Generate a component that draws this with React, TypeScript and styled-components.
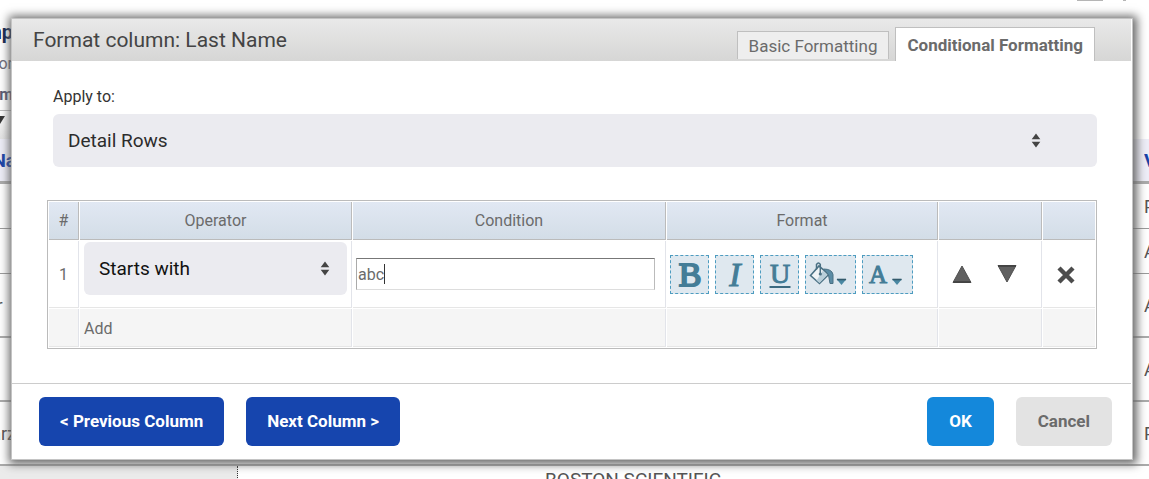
import React, { useState } from 'react';
import styled, { createGlobalStyle, css } from 'styled-components';

const GlobalStyle = createGlobalStyle`
  *, *::before, *::after { box-sizing: border-box; }
  body {
    margin: 0;
    overflow: hidden;
    background: #fff;
    font-family: Roboto, "Liberation Sans", sans-serif;
    font-size: 16px;
    color: #6b6b6b;
  }
  button, input, select { font: inherit; color: inherit; margin: 0; }
`;

/* ---------- report behind the dialog ---------- */

const Screen = styled.div`
  position: relative;
  min-height: 100vh;
  overflow: hidden;
`;

const Report = styled.div`
  display: flex;
  flex-direction: column;
`;

const ReportTop = styled.div`
  display: flex;
  justify-content: flex-end;
  gap: 20px;
  height: 16px;
  padding-right: 23px;
`;

const Mark = styled.span<{ $width: number }>`
  width: ${p => p.$width}px;
  height: 1px;
  background: #b5b5b5;
`;

const ReportLine = styled.div<{ $height: number; $size?: number; $bold?: boolean; $color: string }>`
  display: flex;
  align-items: center;
  justify-content: flex-end;
  width: 13px;
  height: ${p => p.$height}px;
  font-size: ${p => p.$size ?? 16}px;
  font-weight: ${p => (p.$bold ? 700 : 400)};
  color: ${p => p.$color};
`;

const ReportTools = styled.div`
  display: flex;
  width: 237px;
  height: 29px;
  padding-top: 5px;
  border-top: 1px solid #bbb;
  background: linear-gradient(#fff, #e4e4e4);
`;

const rowKinds = {
  head: css`
    height: 45px;
    background: #eeeef8;
    border-bottom: 3px solid #aaa;
    color: #1742a8;
    font-weight: 700;
    font-size: 19px;
  `,
  small: css`
    height: 45px;
    border-bottom: 1px solid #999;
  `,
  large: css`
    height: 64px;
    border-bottom: 2px solid #aaa;
  `,
};

const ReportRow = styled.div<{ $kind: keyof typeof rowKinds }>`
  display: flex;
  justify-content: space-between;
  align-items: center;
  font-size: 18px;
  color: #555;
  ${p => rowKinds[p.$kind]}
`;

const RowStart = styled.span`
  display: flex;
  justify-content: flex-end;
  width: 16px;
`;

const RowEnd = styled.span`
  width: 5px;
  overflow: hidden;
`;

const GroupRow = styled.div`
  display: grid;
  grid-template-columns: 238px 1fr;
  height: 32px;
`;

const GroupLead = styled.div`
  background: #ebebeb;
  border-right: 1px dotted #333;
`;

const GroupName = styled.div`
  padding: 2px 0 0 307px;
  font-size: 19px;
  line-height: 24px;
  color: #555;
`;

/* ---------- dialog ---------- */

const Dialog = styled.section`
  position: absolute;
  top: 18px;
  left: 11px;
  right: 16px;
  padding-right: 1px;
  border: 1px solid #c4c4c4;
  background: #fff;
  box-shadow: 1px 1px 9px 3px #666;
`;

const TitleBar = styled.header`
  display: flex;
  justify-content: space-between;
  align-items: flex-end;
  height: 42px;
  padding: 0 36px 0 21px;
  background: linear-gradient(#e9e9e9, #d6d6d5);
`;

const Title = styled.h1`
  margin: 0;
  font-size: 21px;
  line-height: 42px;
  font-weight: 400;
  color: #444;
`;

const Tabs = styled.nav`
  display: flex;
  align-items: flex-end;
  gap: 6px;
`;

const Tab = styled.button<{ $active?: boolean }>`
  height: ${p => (p.$active ? 34 : 28)}px;
  margin-bottom: ${p => (p.$active ? 0 : 2)}px;
  padding: 0 11px;
  border: 1px solid #bfbfbf;
  border-bottom: 0;
  background: ${p => (p.$active ? '#fff' : '#eee')};
  font-size: 17px;
  font-weight: ${p => (p.$active ? 700 : 400)};
  color: #6b6b6b;
`;

const Body = styled.div`
  padding: 26px 34px 34px 35px;
`;

const Field = styled.div`
  display: flex;
  flex-direction: column;
  gap: 8px;
  margin: 0 0 33px 6px;
`;

const Label = styled.label`
  line-height: 19px;
  color: #333;
`;

const SelectBox = styled.div<{ $inset: number }>`
  position: relative;
  width: 100%;
  svg {
    position: absolute;
    top: 19px;
    right: ${p => p.$inset}px;
    pointer-events: none;
  }
`;

const Select = styled.select<{ $dark?: boolean }>`
  display: block;
  width: 100%;
  height: 53px;
  padding: 0 15px;
  border: 0;
  border-radius: 6px;
  appearance: none;
  background: #ebebf0;
  font-size: 19px;
  color: ${p => (p.$dark ? '#111' : '#2c2c2c')};
`;

const Rules = styled.table`
  width: 100%;
  table-layout: fixed;
  border: 1px solid #bbb;
  border-spacing: 1px;
  border-collapse: separate;
`;

const Col = styled.col<{ $width?: number }>`
  width: ${p => (p.$width ? `${p.$width}px` : 'auto')};
`;

const HeadCell = styled.th`
  height: 38px;
  padding: 0;
  border-right: 1px solid #bbb;
  border-bottom: 1px solid #bbb;
  background: linear-gradient(#e1e8f3, #d3dde7);
  font-weight: 400;
  &:last-child { border-right: 0; }
`;

const Cell = styled.td<{ $footer?: boolean; $center?: boolean }>`
  height: ${p => (p.$footer ? 38 : 67)}px;
  padding: 0 4px;
  border-right: 1px solid #e2e4ea;
  border-bottom: 1px solid #e6e6e6;
  background: ${p => (p.$footer ? '#f5f5f5' : '#fff')};
  text-align: ${p => (p.$center ? 'center' : 'left')};
  &:last-child { border-right: 0; }
`;

const OperatorSlot = styled.div`
  padding-bottom: 12px;
`;

const ConditionSlot = styled.div`
  position: relative;
  margin: 0 6px 0 -1px;
`;

const ConditionInput = styled.input`
  display: block;
  width: 100%;
  height: 32px;
  padding: 0 1px;
  border: 1px solid;
  border-color: #777 #bbb #ddd #aaa;
  background: #fff;
  outline: 0;
  caret-color: transparent;
`;

const Caret = styled.span`
  position: absolute;
  left: 28px;
  top: 6px;
  width: 1px;
  height: 20px;
  background: #333;
`;

const ButtonRow = styled.div<{ $gap?: number; $indent?: boolean }>`
  display: flex;
  gap: ${p => p.$gap ?? 0}px;
  margin-left: ${p => (p.$indent ? 9 : -1)}px;
`;

const FormatButton = styled.button<{ $menu?: boolean }>`
  display: flex;
  align-items: center;
  justify-content: center;
  width: ${p => (p.$menu ? 51 : 39)}px;
  height: 39px;
  padding: 0;
  border: 1px dashed #4d9cc0;
  background: #dfe8ef;
`;

const IconButton = styled.button`
  display: inline-flex;
  padding: 0;
  border: 0;
  background: none;
`;

const LinkButton = styled.button`
  padding: 1px 0 0;
  border: 0;
  background: none;
`;

const Footer = styled.footer`
  display: flex;
  justify-content: space-between;
  padding: 13px 19px 13px 27px;
  border-top: 1px solid #ccc;
`;

const Actions = styled.div`
  display: flex;
  gap: 22px;
`;

const tones = {
  primary: css`padding: 0 21px 1px; background: #1645ae; color: #fff;`,
  accent: css`padding: 0 22px 1px; background: #1488db; color: #fff;`,
  muted: css`padding: 0 22px 1px; background: #e3e3e3; color: #6b6b6b;`,
};

const ActionButton = styled.button<{ $tone: keyof typeof tones }>`
  height: 49px;
  border: 0;
  border-radius: 6px;
  font-size: 17px;
  font-weight: 700;
  ${p => tones[p.$tone]}
`;

/* ---------- icons ---------- */

const Sorter = () => (
  <svg width="10" height="15" viewBox="0 0 10 15" aria-hidden="true">
    <path d="M5 0.5 9.3 6.3H0.7Z M5 14.5 9.3 8.7H0.7Z" fill="#444" />
  </svg>
);

type GlyphProps = { char: string; size: number; weight: number; italic?: boolean; y: number; underline?: boolean };

const Glyph = ({ char, size, weight, italic, y, underline }: GlyphProps) => (
  <svg width="37" height="37" viewBox="0 0 37 37" aria-hidden="true">
    <text
      x="19" y={y} textAnchor="middle" fill="#447d97" stroke="#447d97" strokeWidth={weight}
      fontFamily="'Liberation Serif', serif" fontSize={size}
      fontStyle={italic ? 'italic' : 'normal'}
    >
      {char}
    </text>
    {underline && <path d="M8.5 31H29.5" stroke="#3c6a80" strokeWidth="2" />}
  </svg>
);

const FillIcon = () => (
  <svg width="49" height="37" viewBox="0 0 49 37" aria-hidden="true">
    <path d="M4.5 19.5 13 10 22.5 18.5 13.5 27.5Z" fill="#f0f4f6" stroke="#4a7083" strokeWidth="1.6" />
    <path d="M13.5 27 21.5 18.8 17 14.5 10.5 24.5Z" fill="#b9cfda" />
    <path d="M10.5 13.5V8.5Q12.5 5.5 14.3 8.5V17" fill="none" stroke="#4a7083" strokeWidth="1.5" />
    <circle cx="14.3" cy="18" r="1.6" fill="#4a7083" />
    <path d="M17.5 13Q26 13 27 18.5V27.5H24L22.5 19Z" fill="#5b8ca5" stroke="#4a7083" />
    <path d="M30.5 23H40.5L35.5 29Z" fill="#4a88a3" />
    <path d="M31 23.5H40" stroke="#345a6c" strokeWidth="1.6" />
  </svg>
);

const ColorIcon = () => (
  <svg width="49" height="37" viewBox="0 0 49 37" aria-hidden="true">
    <text x="15" y="27" textAnchor="middle" fill="#447d97" stroke="#447d97" strokeWidth="1" fontFamily="'Liberation Serif', serif" fontSize="25">A</text>
    <path d="M29 23H39L34 29Z" fill="#4a88a3" />
    <path d="M29.5 23.5H38.5" stroke="#345a6c" strokeWidth="1.6" />
  </svg>
);

const Triangle = ({ down }: { down?: boolean }) => (
  <svg width="20" height="20" viewBox="0 0 20 20" aria-hidden="true">
    <path d={down ? 'M1 1.5H19L10 18Z' : 'M1 18.5H19L10 2Z'} fill="#606060" stroke="#505050" strokeLinejoin="round" />
    <path d={down ? 'M1 2H19' : 'M1.5 18H18.5'} stroke="#404040" strokeWidth="1.6" />
  </svg>
);

const Cross = () => (
  <svg width="20" height="20" viewBox="0 0 20 20" aria-hidden="true">
    <path d="M3 4 17 18M17 4 3 18" stroke="#4c4c4c" strokeWidth="4.4" />
  </svg>
);

const reportRows: { kind: keyof typeof rowKinds; start: string; end: string }[] = [
  { kind: 'head', start: 'Na', end: 'V' },
  { kind: 'small', start: '', end: 'P' },
  { kind: 'small', start: '', end: 'A' },
  { kind: 'large', start: 'r\u00a0\u00a0\u00a0', end: 'A' },
  { kind: 'large', start: '', end: 'A' },
  { kind: 'large', start: 'arz', end: 'P' },
];

export default function App() {
  const [condition, setCondition] = useState('abc');

  return (
    <Screen>
      <GlobalStyle />
      <Report aria-hidden="true">
        <ReportTop>
          <Mark $width={26} />
          <Mark $width={3} />
        </ReportTop>
        <ReportLine $height={31} $size={20} $bold $color="#0d2450">mp</ReportLine>
        <ReportLine $height={32} $color="#6b6b7a">or</ReportLine>
        <ReportLine $height={31} $bold $color="#5a5a72">m</ReportLine>
        <ReportTools>
          <svg width="6" height="8" viewBox="0 0 6 8"><path d="M0 0H5L0 8Z" fill="#333" /></svg>
        </ReportTools>
        {reportRows.map((row, i) => (
          <ReportRow key={i} $kind={row.kind}>
            <RowStart>{row.start}</RowStart>
            <RowEnd>{row.end}</RowEnd>
          </ReportRow>
        ))}
        <GroupRow>
          <GroupLead />
          <GroupName>BOSTON SCIENTIFIC</GroupName>
        </GroupRow>
      </Report>

      <Dialog role="dialog" aria-labelledby="dialog-title">
        <TitleBar>
          <Title id="dialog-title">Format column: Last Name</Title>
          <Tabs>
            <Tab type="button">Basic Formatting</Tab>
            <Tab type="button" $active>Conditional Formatting</Tab>
          </Tabs>
        </TitleBar>

        <Body>
          <Field>
            <Label htmlFor="apply-to">Apply to:</Label>
            <SelectBox $inset={56}>
              <Select id="apply-to"><option>Detail Rows</option></Select>
              <Sorter />
            </SelectBox>
          </Field>

          <Rules>
            <colgroup>
              <Col $width={30} />
              <Col $width={272} />
              <Col />
              <Col $width={271} />
              <Col $width={103} />
              <Col $width={52} />
            </colgroup>
            <thead>
              <tr>
                <HeadCell>#</HeadCell>
                <HeadCell>Operator</HeadCell>
                <HeadCell>Condition</HeadCell>
                <HeadCell>Format</HeadCell>
                <HeadCell />
                <HeadCell />
              </tr>
            </thead>
            <tbody>
              <tr>
                <Cell $center>1</Cell>
                <Cell>
                  <OperatorSlot>
                    <SelectBox $inset={17}>
                      <Select $dark aria-label="Operator"><option>Starts with</option></Select>
                      <Sorter />
                    </SelectBox>
                  </OperatorSlot>
                </Cell>
                <Cell>
                  <ConditionSlot>
                    <ConditionInput aria-label="Condition" value={condition} onChange={e => setCondition(e.target.value)} />
                    <Caret />
                  </ConditionSlot>
                </Cell>
                <Cell>
                  <ButtonRow $gap={6}>
                    <FormatButton type="button" aria-label="Bold"><Glyph char="B" size={34} weight={2} y={30} /></FormatButton>
                    <FormatButton type="button" aria-label="Italic"><Glyph char="I" size={34} weight={1} y={30} italic /></FormatButton>
                    <FormatButton type="button" aria-label="Underline"><Glyph char="U" size={28} weight={1} y={27} underline /></FormatButton>
                    <FormatButton type="button" $menu aria-label="Fill color"><FillIcon /></FormatButton>
                    <FormatButton type="button" $menu aria-label="Text color"><ColorIcon /></FormatButton>
                  </ButtonRow>
                </Cell>
                <Cell>
                  <ButtonRow $gap={25} $indent>
                    <IconButton type="button" aria-label="Move up"><Triangle /></IconButton>
                    <IconButton type="button" aria-label="Move down"><Triangle down /></IconButton>
                  </ButtonRow>
                </Cell>
                <Cell>
                  <ButtonRow $indent>
                    <IconButton type="button" aria-label="Delete"><Cross /></IconButton>
                  </ButtonRow>
                </Cell>
              </tr>
              <tr>
                <Cell $footer />
                <Cell $footer><LinkButton type="button">Add</LinkButton></Cell>
                <Cell $footer />
                <Cell $footer />
                <Cell $footer />
                <Cell $footer />
              </tr>
            </tbody>
          </Rules>
        </Body>

        <Footer>
          <Actions>
            <ActionButton type="button" $tone="primary">&lt; Previous Column</ActionButton>
            <ActionButton type="button" $tone="primary">Next Column &gt;</ActionButton>
          </Actions>
          <Actions>
            <ActionButton type="button" $tone="accent">OK</ActionButton>
            <ActionButton type="button" $tone="muted">Cancel</ActionButton>
          </Actions>
        </Footer>
      </Dialog>
    </Screen>
  );
}
